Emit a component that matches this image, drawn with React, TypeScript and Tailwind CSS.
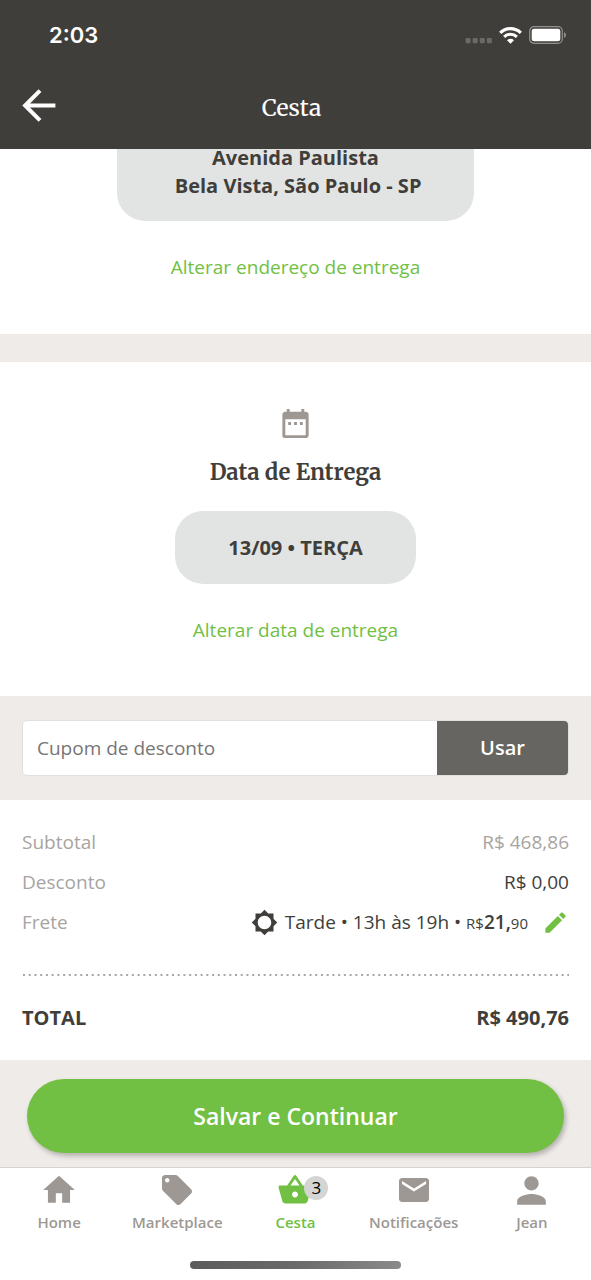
import type { ComponentType, ReactNode } from "react";
import {
  MdBrightness5,
  MdDateRange,
  MdEdit,
  MdHome,
  MdLocalOffer,
  MdMail,
  MdPerson,
  MdShoppingBasket,
} from "react-icons/md";

function StatusBar() {
  return (
    <div className="flex h-[70px] items-center justify-between pr-6 pl-[49px]">
      <span className="font-['Inter',sans-serif] text-[22px] font-semibold">2:03</span>
      <div className="flex items-center gap-[7px]">
        <svg className="h-[18px] w-[27px]" viewBox="0 0 27 18" fill="#6b6a67" aria-hidden="true">
          <rect x="0.6" y="12" width="5" height="5.2" rx="1.3" />
          <rect x="7.7" y="12" width="5" height="5.2" rx="1.3" />
          <rect x="14.8" y="12" width="5" height="5.2" rx="1.3" />
          <rect x="21.9" y="12" width="5" height="5.2" rx="1.3" />
        </svg>
        <svg className="h-[17px] w-[23px]" viewBox="0 0 23 17" fill="none" stroke="#fff" aria-hidden="true">
          <path d="M1.2 5.8a14.8 14.8 0 0 1 20.6 0" strokeWidth="3.2" />
          <path d="M5.1 9.8a9.2 9.2 0 0 1 12.8 0" strokeWidth="3" />
          <path d="M11.5 16.7 8 13.2a5 5 0 0 1 7 0Z" fill="#fff" stroke="none" />
        </svg>
        <svg className="h-[18px] w-[38px]" viewBox="0 0 38 18" fill="none" aria-hidden="true">
          <rect x="0.7" y="0.7" width="32.6" height="16.6" rx="4.4" stroke="#92918f" strokeWidth="1.2" />
          <rect x="2.7" y="2.7" width="28.6" height="12.6" rx="2.4" fill="#fff" />
          <path d="M35 6.2c2.6.8 2.6 4.8 0 5.6Z" fill="#92918f" />
        </svg>
      </div>
    </div>
  );
}

function Header() {
  return (
    <header className="relative z-10 bg-[#403e3a] text-white">
      <StatusBar />
      <div className="grid grid-cols-[1fr_auto_1fr] items-start pr-[30px] pb-6 pl-[22px]">
        <button type="button" aria-label="Voltar" className="mt-[18px] justify-self-start">
          <svg className="h-[35px] w-[35px]" viewBox="0 0 35 35" fill="none" stroke="#fff" strokeWidth="4" aria-hidden="true">
            <path d="M18 2.6 3.1 17.5 18 32.4M3.4 17.5h30" />
          </svg>
        </button>
        <h1 className="mt-[21px] font-['Merriweather','Noto_Serif','DejaVu_Serif_Condensed','DejaVu_Serif',serif] text-[23px] leading-[34px]">
          Cesta
        </h1>
      </div>
    </header>
  );
}

function ChangeLink({ children }: { children: ReactNode }) {
  return (
    <a href="#" className="mt-8 text-[#71c043]">
      {children}
    </a>
  );
}

function Row({ label, children }: { label: string; children: ReactNode }) {
  return (
    <div className="flex h-10 items-center justify-between">
      <dt className="text-[#a8a4a1]">{label}</dt>
      <dd className="flex items-center">{children}</dd>
    </div>
  );
}

type Tab = {
  label: string;
  Icon: ComponentType<{ className?: string }>;
  size: string;
  badge?: number;
};

const tabs: Tab[] = [
  { label: "Home", Icon: MdHome, size: "size-[38px]" },
  { label: "Marketplace", Icon: MdLocalOffer, size: "size-9" },
  { label: "Cesta", Icon: MdShoppingBasket, size: "size-9", badge: 3 },
  { label: "Notificações", Icon: MdMail, size: "size-9" },
  { label: "Jean", Icon: MdPerson, size: "size-[43px]" },
];

function TabBar() {
  return (
    <nav className="border-t border-[#d6d4d2] bg-white">
      <ul className="grid grid-cols-5">
        {tabs.map(({ label, Icon, size, badge }) => (
          <li key={label}>
            <a
              href="#"
              className={
                badge
                  ? "flex flex-col items-center text-[#71c043]"
                  : "flex flex-col items-center text-[#9d9894]"
              }
            >
              <span className="relative flex h-11 w-11 items-center justify-center">
                <Icon className={`${size} shrink-0`} />
                {badge && (
                  <span className="absolute top-2 left-[31px] flex size-6 items-center justify-center rounded-full bg-[#d5d5d3] text-[17px] text-black">
                    {badge}
                  </span>
                )}
              </span>
              <span className="text-[15px] leading-5 font-semibold">{label}</span>
            </a>
          </li>
        ))}
      </ul>
      <div className="flex justify-center pt-[29px] pb-[11px]">
        <div className="h-2 w-[211px] rounded-full bg-linear-to-r from-[#5c5c5c] via-[#6a6a6a] to-[#8a8a8a]" />
      </div>
    </nav>
  );
}

export default function App() {
  return (
    <div className="flex min-h-screen flex-col bg-white font-['Open_Sans',sans-serif] text-[19px] leading-7 text-[#403e3a]">
      <Header />
      <main className="flex flex-1 flex-col">
        <section className="flex flex-col items-center pb-[53px]">
          <p className="-mt-[5px] rounded-b-[28px] bg-[#e2e4e3] px-[53px] pb-[21px] text-center text-[20px] leading-7 font-bold">
            Avenida Paulista
            <br />
            &nbsp;Bela Vista, São Paulo - SP
          </p>
          <ChangeLink>Alterar endereço de entrega</ChangeLink>
        </section>

        <div className="h-7 bg-[#efebe8]" />

        <section className="flex flex-col items-center pt-11 pb-[52px]">
          <MdDateRange className="size-[35px] text-[#9d9894]" />
          <h2 className="mt-[14px] font-['Merriweather','Noto_Serif','DejaVu_Serif_Condensed','DejaVu_Serif',serif] text-[22px] leading-[34px] font-bold">
            Data de Entrega
          </h2>
          <p className="mt-[22px] rounded-[28px] bg-[#e2e4e3] px-[53px] pt-[23px] pb-[22px] text-[20px] leading-7 font-bold">
            13/09 • TERÇA
          </p>
          <ChangeLink>Alterar data de entrega</ChangeLink>
        </section>

        <form
          className="bg-[#efebe8] px-[22px] py-6"
          onSubmit={(event) => event.preventDefault()}
        >
          <div className="flex h-14 overflow-hidden rounded-[5px] border border-[#e2e0de] bg-white">
            <input
              type="text"
              aria-label="Cupom de desconto"
              placeholder="Cupom de desconto"
              className="min-w-0 flex-1 px-[14px] outline-none placeholder:text-[#777674]"
            />
            <button type="submit" className="w-[131px] bg-[#666561] text-[20px] font-semibold text-white">
              Usar
            </button>
          </div>
        </form>

        <dl className="px-[22px] pt-[22px] pb-[22px]">
          <Row label="Subtotal">
            <span className="text-[#a8a4a1]">R$ 468,86</span>
          </Row>
          <Row label="Desconto">R$ 0,00</Row>
          <Row label="Frete">
            <MdBrightness5 className="mr-[7px] size-[27px]" />
            <span>
              Tarde • 13h às 19h • <span className="text-[15px]">R$</span>
              <span className="font-semibold">21,</span>
              <span className="text-[15px]">90</span>
            </span>
            <button type="button" aria-label="Editar frete" className="ml-[14px] text-[#71c043]">
              <MdEdit className="size-[27px]" />
            </button>
          </Row>
          <svg className="mt-8 mb-[22px] block h-[2px] w-full" aria-hidden="true">
            <line x1="1" y1="1" x2="100%" y2="1" stroke="#a9a6a4" strokeWidth="2" strokeDasharray="2 3.73" />
          </svg>
          <div className="flex h-10 items-center justify-between text-[20px] font-bold">
            <dt>TOTAL</dt>
            <dd>R$ 490,76</dd>
          </div>
        </dl>

        <div className="flex-1 bg-[#efebe8] px-[27px] pt-[19px] pb-[14px]">
          <button
            type="button"
            className="h-[74px] w-full rounded-full bg-[#71c043] text-[23px] font-semibold text-white shadow-[2px_3px_5px_rgba(0,0,0,0.25)]"
          >
            Salvar e Continuar
          </button>
        </div>
      </main>
      <TabBar />
    </div>
  );
}
